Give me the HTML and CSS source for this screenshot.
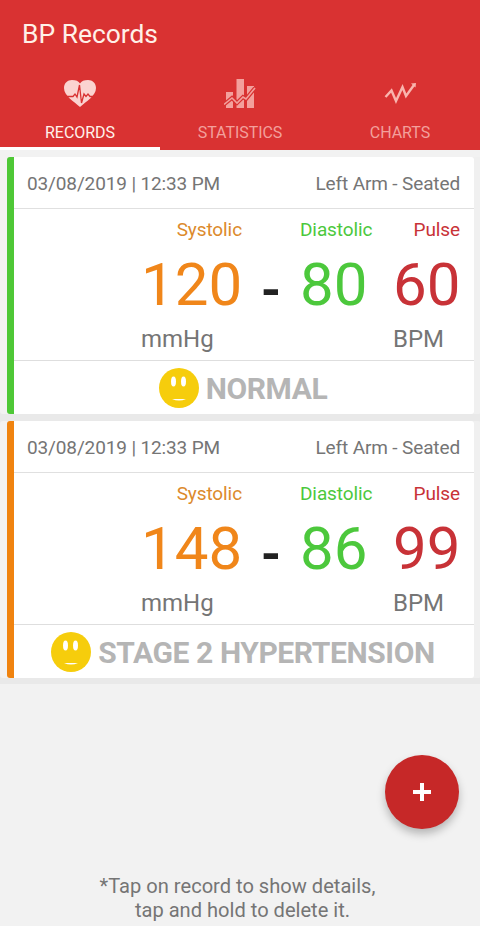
FILE: index.html
```html
<!DOCTYPE html>
<html lang="en">
<head>
    <meta charset="UTF-8">
    <meta name="viewport" content="width=device-width, initial-scale=1.0">
    <title>BP Records</title>
    <link rel="stylesheet" href="styles.css">
</head>
<body>
    <header class="header">
        <h1>BP Records</h1>
        <nav class="tabs">
            <a class="tab active">
                <svg class="tab-icon" viewBox="0 0 32 32">
                    <path class="fill" d="M16 30C10 24.500 0 19 0 11C0 6 3.500 3 8 3C12 3 14.500 4 16 6.500C17.500 4 20 3 24 3C28.500 3 32 6 32 11C32 19 22 24.500 16 30Z"/>
                    <path class="pulse" d="M1 19.500H9L11 17L13 20L15.500 8L17.500 26L20 17L22 19.500L24 17L26 19.500H31"/>
                </svg>
                <span>RECORDS</span>
            </a>
            <a class="tab">
                <svg class="tab-icon" viewBox="0 0 32 32">
                    <path class="fill" d="M2 15H9V31H2ZM12.500 2H20V31H12.500ZM23 9H30V31H23Z"/>
                    <path class="trend-gap" d="M0 27.500L8 21L13 26L19 20L22 22L31 11"/>
                    <path class="trend" d="M0 27.500L8 21L13 26L19 20L22 22L31 11"/>
                </svg>
                <span>STATISTICS</span>
            </a>
            <a class="tab">
                <svg class="tab-icon" viewBox="0 0 32 32">
                    <path class="zigzag" d="M1.500 20L7.500 13.500L12 24L18.500 10L22 19L30 8"/>
                    <path class="zigzag-tip" d="M27 6.500L32 6L31.500 10.500Z"/>
                </svg>
                <span>CHARTS</span>
            </a>
        </nav>
    </header>

    <main class="records">
        <article class="card normal">
            <div class="card-top">
                <span>03/08/2019 | 12:33 PM</span>
                <span>Left Arm - Seated</span>
            </div>
            <div class="readings">
                <span class="label systolic">Systolic</span>
                <span class="label diastolic">Diastolic</span>
                <span class="label pulse-rate">Pulse</span>
                <span class="value systolic">120</span>
                <span class="dash">-</span>
                <span class="value diastolic">80</span>
                <span class="value pulse-rate">60</span>
                <span class="unit mmhg">mmHg</span>
                <span class="unit bpm">BPM</span>
            </div>
            <div class="result">
                <svg class="face" viewBox="0 0 40 40">
                    <circle cx="20" cy="20" r="20" fill="#f6cd0c"/>
                    <ellipse cx="14.500" cy="13.500" rx="2.500" ry="5" fill="#fff"/>
                    <ellipse cx="24.500" cy="13.500" rx="2.500" ry="5" fill="#fff"/>
                    <path d="M13 31H27Q20 34 13 31Z" fill="#fff"/>
                </svg>
                <span>NORMAL</span>
            </div>
        </article>

        <article class="card stage-2">
            <div class="card-top">
                <span>03/08/2019 | 12:33 PM</span>
                <span>Left Arm - Seated</span>
            </div>
            <div class="readings">
                <span class="label systolic">Systolic</span>
                <span class="label diastolic">Diastolic</span>
                <span class="label pulse-rate">Pulse</span>
                <span class="value systolic">148</span>
                <span class="dash">-</span>
                <span class="value diastolic">86</span>
                <span class="value pulse-rate">99</span>
                <span class="unit mmhg">mmHg</span>
                <span class="unit bpm">BPM</span>
            </div>
            <div class="result">
                <svg class="face" viewBox="0 0 40 40">
                    <circle cx="20" cy="20" r="20" fill="#f6cd0c"/>
                    <ellipse cx="14.500" cy="13.500" rx="2.500" ry="5" fill="#fff"/>
                    <ellipse cx="24.500" cy="13.500" rx="2.500" ry="5" fill="#fff"/>
                    <path d="M13 31H27Q20 34 13 31Z" fill="#fff"/>
                </svg>
                <span>STAGE 2 HYPERTENSION</span>
            </div>
        </article>
    </main>

    <p class="hint">*Tap on record to show details,&nbsp;<br>&nbsp;tap and hold to delete it.</p>

    <button class="fab" aria-label="Add record">
        <svg viewBox="0 0 18 18">
            <path d="M9 0V18M0 9H18" stroke="#fff" stroke-width="4"/>
        </svg>
    </button>
</body>
</html>
```

FILE: styles.css
```css
* {
    margin: 0;
    padding: 0;
    box-sizing: border-box;
}

body {
    font-family: Roboto, sans-serif;
    background: #f2f2f2;
    height: 926px;
    color: #757575;
    display: flex;
    flex-direction: column;
    overflow: hidden;
}

.header {
    height: 150px;
    background: #d93232;
    color: white;
    display: flex;
    flex-direction: column;
    justify-content: space-between;
}

.header h1 {
    font-size: 26.4px;
    font-weight: 400;
    line-height: 30px;
    padding: 19px 22px 0;
    color: #fff0e8;
}

.tabs {
    display: grid;
    grid-template-columns: repeat(3, 1fr);
    height: 73px;
}

.tab {
    display: flex;
    flex-direction: column;
    align-items: center;
    font-size: 16px;
    line-height: 20px;
    letter-spacing: -0.05px;
    color: #f3a09c;
    border-bottom: 3px solid transparent;
}

.tab.active {
    color: #fff0ea;
    border-bottom-color: white;
}

.tab-icon {
    width: 32px;
    height: 32px;
    margin-bottom: 14px;
}

.fill {
    fill: currentColor;
}

.tab.active .fill {
    fill: #fbd3d0;
}

.pulse {
    fill: none;
    stroke: #d93232;
    stroke-width: 1.3;
}

.trend, .trend-gap, .zigzag {
    fill: none;
    stroke: currentColor;
    stroke-width: 1.6;
}

.trend-gap {
    stroke: #d93232;
    stroke-width: 4;
}

.zigzag {
    stroke: #f9b5ae;
    stroke-width: 2.4;
}

.zigzag-tip {
    fill: #f9b5ae;
}

.records {
    padding: 7px 0 6px;
    background: linear-gradient(#f2f2f2 10px, #e9e9e9 10px);
    display: flex;
    flex-direction: column;
    gap: 7px;
}

.card {
    height: 257px;
    margin: 0 6px 0 7px;
    background: white;
    border-left: 7px solid;
    border-radius: 3px;
    box-shadow: 7px 0 #f0f0f0, -7px 0 #f3f2f2;
}

.card.normal {
    border-left-color: #4ec836;
}

.card.stage-2 {
    border-left-color: #f0830f;
}

.card-top {
    height: 52px;
    padding: 1px 14px 0 13px;
    border-bottom: 1px solid #e0e0e0;
    display: flex;
    align-items: center;
    justify-content: space-between;
    font-size: 19px;
    letter-spacing: -0.13px;
}

.readings {
    height: 152px;
    border-bottom: 1px solid #dedede;
    padding: 8px 14px 0 127px;
    display: grid;
    grid-template-columns: 101px 58px 72px 21px 67px;
    grid-template-rows: 26px 83px 26px;
}

.label {
    font-size: 19px;
    line-height: 26px;
    letter-spacing: -0.1px;
    text-align: right;
}

.value {
    font-size: 60px;
    line-height: 84px;
}

.label.systolic, .value.systolic, .mmhg {
    grid-column: 1;
}

.label.diastolic, .value.diastolic {
    grid-column: 3;
}

.label.pulse-rate, .value.pulse-rate, .bpm {
    grid-column: 5;
}

.systolic {
    color: #f0861a;
}

.label.systolic {
    color: #dc8a2c;
}

.diastolic {
    color: #4cc83c;
}

.pulse-rate {
    color: #c83237;
}

.dash {
    grid-column: 2;
    text-align: center;
    font-size: 52px;
    font-weight: 700;
    line-height: 95px;
    height: 83px;
    color: #222;
}

.value {
    height: 83px;
}

.unit {
    font-size: 24px;
    line-height: 26px;
}

.result {
    height: 53px;
    padding: 1px 2px 0 0;
    display: flex;
    align-items: center;
    justify-content: center;
    gap: 7px;
    font-size: 30px;
    font-weight: 700;
    letter-spacing: -0.4px;
    color: #b5b5b5;
}

.face {
    width: 40px;
    height: 40px;
}

.hint {
    margin-top: auto;
    padding-bottom: 4px;
    text-align: center;
    font-size: 20.1px;
    line-height: 24px;
}

.fab {
    position: absolute;
    left: 385px;
    top: 755px;
    width: 74px;
    height: 74px;
    border: none;
    border-radius: 50%;
    background: #c62828;
    box-shadow: 0 5px 9px rgba(0, 0, 0, 0.25);
    display: flex;
    align-items: center;
    justify-content: center;
}

.fab svg {
    width: 18px;
    height: 18px;
}
```
